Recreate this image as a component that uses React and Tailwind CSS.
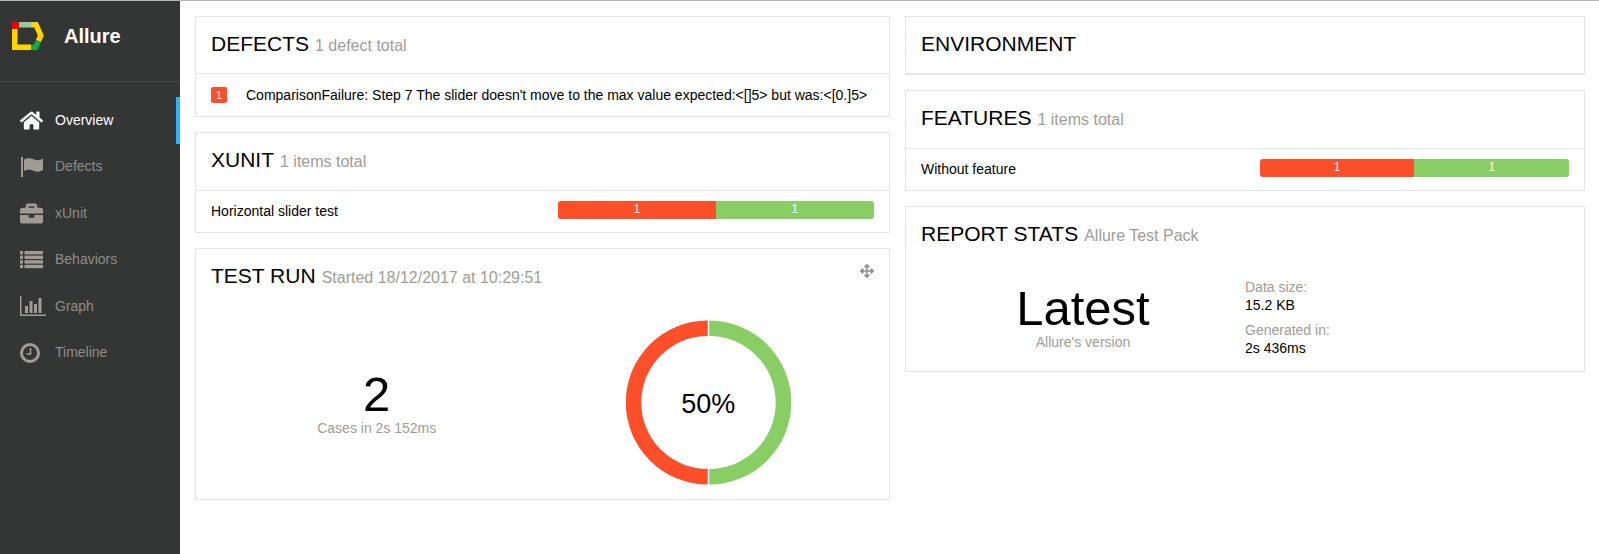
import React from 'react';
import { FaHome, FaBriefcase, FaArrowsAlt } from 'react-icons/fa';

function Logo() {
  return (
    <svg width="32" height="28" viewBox="0 0 32 28" className="shrink-0">
      <g fill="none" strokeWidth="5.5">
        <path d="M2.75 4V25.25H19" stroke="#ffd500" />
        <path d="M6 2.75H19" stroke="#97c99c" />
        <path d="M19 2.75H24L28.8 13.5L26.4 19" stroke="#ffd500" />
        <path d="M26.4 19L23.8 25.25H19" stroke="#12a84a" />
      </g>
      <rect x="0" y="0" width="7" height="7" fill="#ee0000" />
    </svg>
  );
}

function FlagIcon() {
  return (
    <svg width="24" height="20" viewBox="0 0 24 20" fill="currentColor">
      <rect x="1" y="0" width="2" height="20" />
      <path d="M4 2.5C8 0.5 11 1 14 2.5C17 3.8 20 3.5 23 1.5V13C20 15 17 15.2 14 14C11 12.6 8 12.2 4 14Z" />
    </svg>
  );
}

function ListIcon() {
  return (
    <svg width="23" height="18" viewBox="0 0 23 18" fill="currentColor">
      <rect x="0" y="0" width="3" height="3.4" />
      <rect x="0" y="4.6" width="3" height="3.4" />
      <rect x="0" y="9.2" width="3" height="3.4" />
      <rect x="0" y="13.8" width="3" height="3.4" />
      <rect x="4.5" y="0" width="18.5" height="3.4" />
      <rect x="4.5" y="4.6" width="18.5" height="3.4" />
      <rect x="4.5" y="9.2" width="18.5" height="3.4" />
      <rect x="4.5" y="13.8" width="18.5" height="3.4" />
    </svg>
  );
}

function GraphIcon() {
  return (
    <svg width="26" height="20" viewBox="0 0 26 20" fill="currentColor">
      <rect x="0" y="0" width="1.5" height="20" />
      <rect x="0" y="18.5" width="26" height="1.5" />
      <rect x="5" y="10" width="3" height="7" />
      <rect x="9.5" y="5" width="3" height="12" />
      <rect x="14" y="8" width="3" height="9" />
      <rect x="18.5" y="2" width="3" height="15" />
    </svg>
  );
}

function ClockIcon() {
  return (
    <svg width="20" height="20" viewBox="0 0 20 20" fill="none" stroke="currentColor">
      <circle cx="10" cy="10" r="8.5" strokeWidth="3" />
      <path d="M10.5 5V11H6.5" strokeWidth="1.6" />
    </svg>
  );
}

const navItems = [
  { label: 'Overview', icon: <FaHome size={23} />, active: true },
  { label: 'Defects', icon: <FlagIcon /> },
  { label: 'xUnit', icon: <FaBriefcase size={23} /> },
  { label: 'Behaviors', icon: <ListIcon /> },
  { label: 'Graph', icon: <GraphIcon /> },
  { label: 'Timeline', icon: <ClockIcon /> },
];

function Sidebar() {
  return (
    <aside className="w-[180px] h-[553px] shrink-0 bg-[#343535]">
      <div className="flex items-center h-[81px] pl-[12px] pb-[11px] border-b border-[#4a4a4a]">
        <Logo />
        <span className="ml-[20px] text-[20px] font-bold text-white">Allure</span>
      </div>
      <nav className="pt-[15px]">
        {navItems.map((item) => (
          <div
            key={item.label}
            className={`flex items-center h-[46.5px] ${
              item.active ? 'text-white border-r-4 border-[#29b6f6]' : 'text-[#8f8d89]'
            }`}
          >
            <span
              className={`flex items-center w-[55px] pl-[20px] ${
                item.active ? 'text-white' : 'text-[#a09b94]'
              }`}
            >
              {item.icon}
            </span>
            <span className="text-[14px]">{item.label}</span>
          </div>
        ))}
      </nav>
    </aside>
  );
}

function Widget({ title, subtitle, headerClass = 'h-[56px]', children }) {
  return (
    <section className="relative bg-white border border-[#e6e5e3]">
      <div className={`px-[15px] pt-[14px] leading-[26px] ${headerClass}`}>
        <span className="text-[21px] text-black">{title}</span>
        {subtitle && <span className="ml-[6px] text-[16px] text-[#a09c97]">{subtitle}</span>}
      </div>
      {children}
    </section>
  );
}

function StatusBar() {
  return (
    <div className="flex w-full h-[18px] mb-[3px] rounded-[3px] overflow-hidden text-[12px] leading-[16px] text-center text-white">
      <div className="flex-1 bg-[#fe4f2b]">1</div>
      <div className="flex-1 bg-[#88ce64]">1</div>
    </div>
  );
}

function ItemRow({ name }) {
  return (
    <div className="grid grid-cols-[1fr_47.7%] items-center h-[41px] px-[15px] text-[14px] text-black">
      <span>{name}</span>
      <StatusBar />
    </div>
  );
}

function Donut() {
  return (
    <div className="relative w-[165px] h-[165px]">
      <svg width="165" height="165" viewBox="0 0 165 165">
        <path d="M83.25 0.5A82 82 0 0 1 83.25 164.5V149A66.5 66.5 0 0 0 83.25 16Z" fill="#88ce64" />
        <path d="M81.75 0.5A82 82 0 0 0 81.75 164.5V149A66.5 66.5 0 0 1 81.75 16Z" fill="#fe4f2b" />
      </svg>
      <div className="absolute inset-0 flex items-center justify-center pt-[4px] text-[27px] text-black">50%</div>
    </div>
  );
}

export default function App() {
  const dividerShort = 'h-[57px] border-b border-[#e9e8e6]';
  const dividerTall = 'h-[58px] border-b border-[#e9e8e6]';
  return (
    <div className="w-[1599px] h-[554px] overflow-hidden bg-white font-['Liberation_Sans',Arial,sans-serif] border-t border-[#b9b2ab]">
      <div className="flex">
        <Sidebar />
        <main className="grid grid-cols-[695px_680px] gap-x-[15px] items-start pl-[15px] pt-[15px]">
          <div className="flex flex-col gap-[15px]">
            <Widget title="DEFECTS" subtitle="1 defect total" headerClass={dividerShort}>
              <div className="flex items-center h-[42px] px-[15px] text-[14px] text-black">
                <span className="flex items-center justify-center w-[16px] h-[16px] mr-[19px] rounded-[2px] bg-[#fe4f2b] text-[11px] text-white">1</span>
                ComparisonFailure: Step 7 The slider doesn't move to the max value expected:&lt;[]5&gt; but was:&lt;[0.]5&gt;
              </div>
            </Widget>
            <Widget title="XUNIT" subtitle="1 items total" headerClass={dividerTall}>
              <ItemRow name="Horizontal slider test" />
            </Widget>
            <Widget title="TEST RUN" subtitle="Started 18/12/2017 at 10:29:51">
              <span className="absolute top-[15px] right-[15px] text-[#8f8f8f]">
                <FaArrowsAlt size={14} />
              </span>
              <div className="grid grid-cols-2 items-center h-[194px] px-[15px]">
                <div className="text-center">
                  <div className="text-[49px] leading-[52px] text-black">2</div>
                  <div className="text-[14px] leading-[16px] text-[#a09c97]">Cases in 2s 152ms</div>
                </div>
                <div className="flex justify-center">
                  <Donut />
                </div>
              </div>
            </Widget>
          </div>
          <div className="flex flex-col gap-[15px]">
            <Widget title="ENVIRONMENT" headerClass={dividerShort} />
            <Widget title="FEATURES" subtitle="1 items total" headerClass={dividerTall}>
              <ItemRow name="Without feature" />
            </Widget>
            <Widget title="REPORT STATS" subtitle="Allure Test Pack">
              <div className="grid grid-cols-2 h-[108px] px-[15px]">
                <div className="text-center pt-[19px]">
                  <div className="text-[49px] leading-[52px] text-black">Latest</div>
                  <div className="text-[14px] leading-[16px] text-[#a09c97]">Allure's version</div>
                </div>
                <div className="text-[14px] leading-[18px] pt-[15px]">
                  <div className="text-[#a09c97]">Data size:</div>
                  <div className="text-black">15.2 KB</div>
                  <div className="mt-[7px] text-[#a09c97]">Generated in:</div>
                  <div className="text-black">2s 436ms</div>
                </div>
              </div>
            </Widget>
          </div>
        </main>
      </div>
    </div>
  );
}
